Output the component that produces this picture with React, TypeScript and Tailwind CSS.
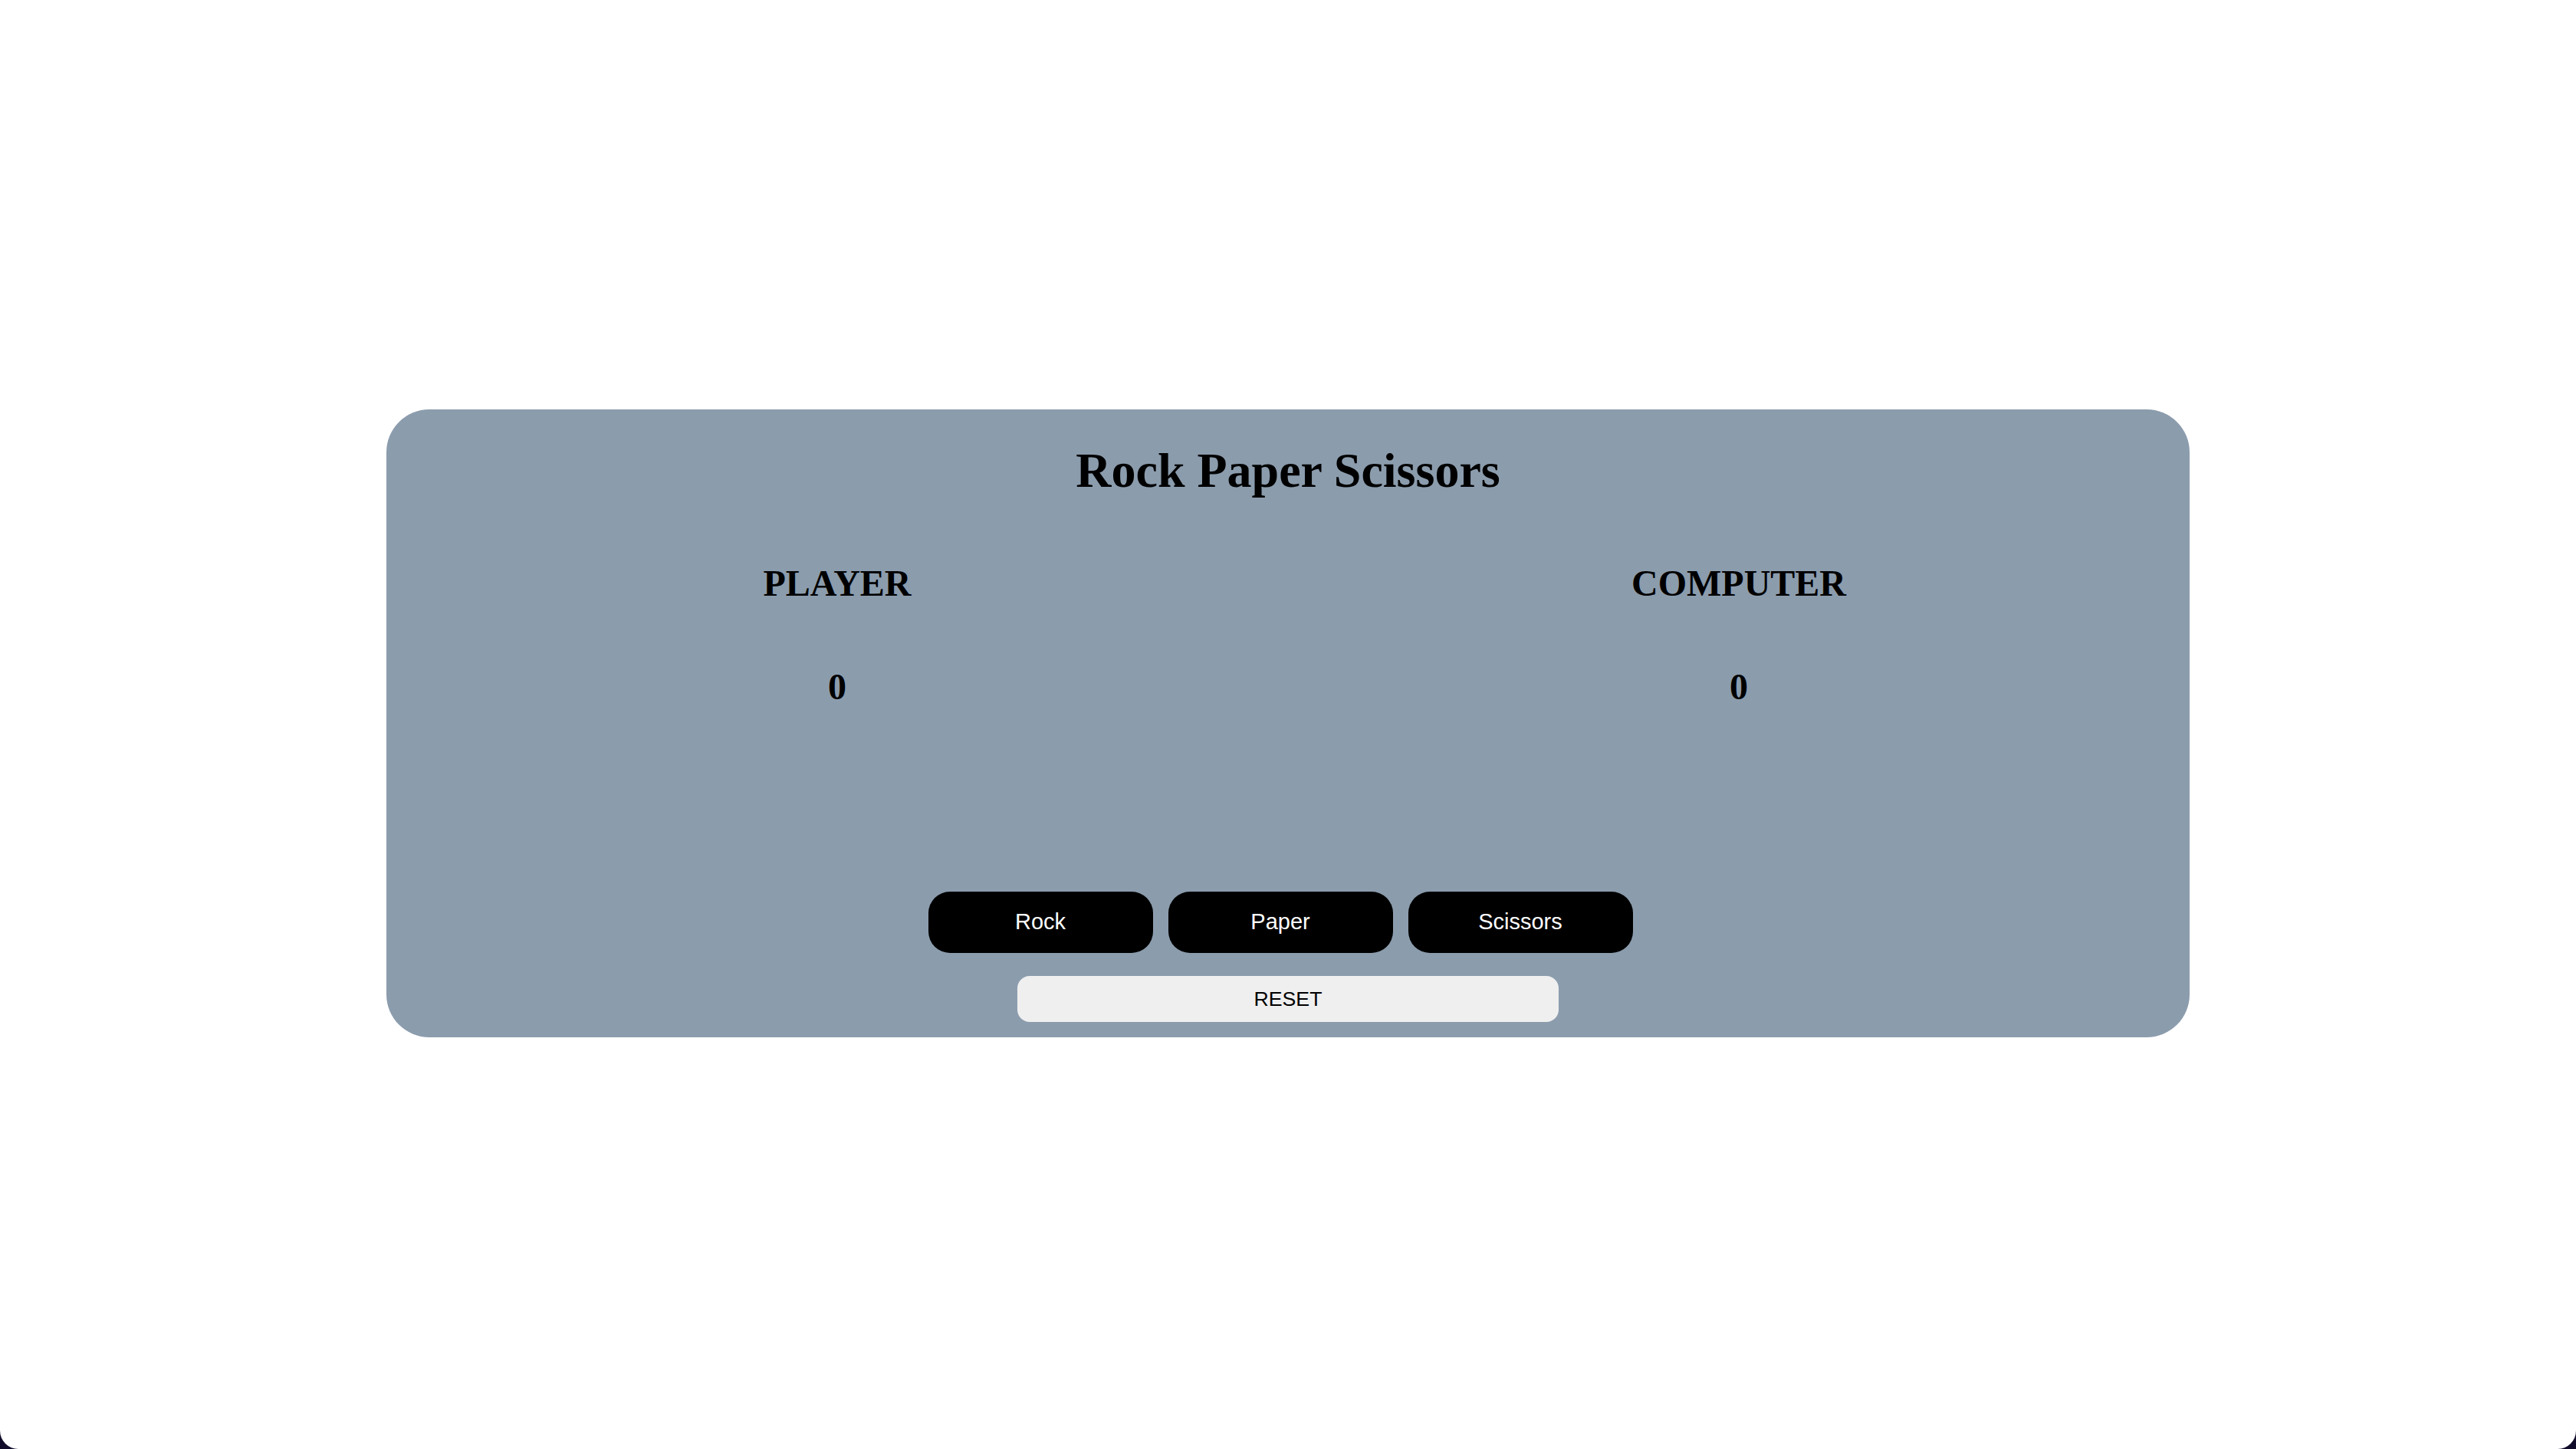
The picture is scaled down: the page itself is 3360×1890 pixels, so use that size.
import { useState } from 'react'

type Move = 'Rock' | 'Paper' | 'Scissors'

const moves: Move[] = ['Rock', 'Paper', 'Scissors']

export default function App() {
  const [player, setPlayer] = useState(0)
  const [computer, setComputer] = useState(0)

  const play = (move: Move) => {
    const pick = moves[Math.floor(Math.random() * 3)]
    if (pick === move) return
    const wins =
      (move === 'Rock' && pick === 'Scissors') ||
      (move === 'Paper' && pick === 'Rock') ||
      (move === 'Scissors' && pick === 'Paper')
    if (wins) setPlayer(player + 1)
    else setComputer(computer + 1)
  }

  const reset = () => {
    setPlayer(0)
    setComputer(0)
  }

  return (
    <div className="bg-[#100c2a]">
      <div className="min-h-screen bg-white rounded-b-[24px] flex items-center justify-center">
        <div className="w-[70%] mb-[3px] bg-[#8b9cad] rounded-[56px] pt-[43px] pb-[20px] flex flex-col items-center text-black">
          <h1 className="font-['Liberation_Serif',serif] font-bold text-[64px] leading-[74px]">
            Rock Paper Scissors
          </h1>

          <div className="w-full flex mt-[82px] font-['Liberation_Serif',serif] font-bold text-[48px] leading-[55px]">
            <div className="flex-1 flex flex-col items-center">
              <h2>PLAYER</h2>
              <p className="mt-[80px]">{player}</p>
            </div>
            <div className="flex-1 flex flex-col items-center">
              <h2>COMPUTER</h2>
              <p className="mt-[80px]">{computer}</p>
            </div>
          </div>

          {/* trailing margin on every button keeps the row a little left of centre */}
          <div className="flex mt-[240px] font-['Liberation_Sans',sans-serif]">
            {moves.map((m) => (
              <button
                key={m}
                onClick={() => play(m)}
                className="w-[293px] h-[80px] mr-[20px] bg-black text-white text-[29px] rounded-[28px]"
              >
                {m}
              </button>
            ))}
          </div>

          <button
            onClick={reset}
            className="mt-[30px] w-[706px] h-[60px] bg-[#efefef] text-black text-[26.7px] rounded-[16px] font-['Liberation_Sans',sans-serif]"
          >
            RESET
          </button>
        </div>
      </div>
    </div>
  )
}
